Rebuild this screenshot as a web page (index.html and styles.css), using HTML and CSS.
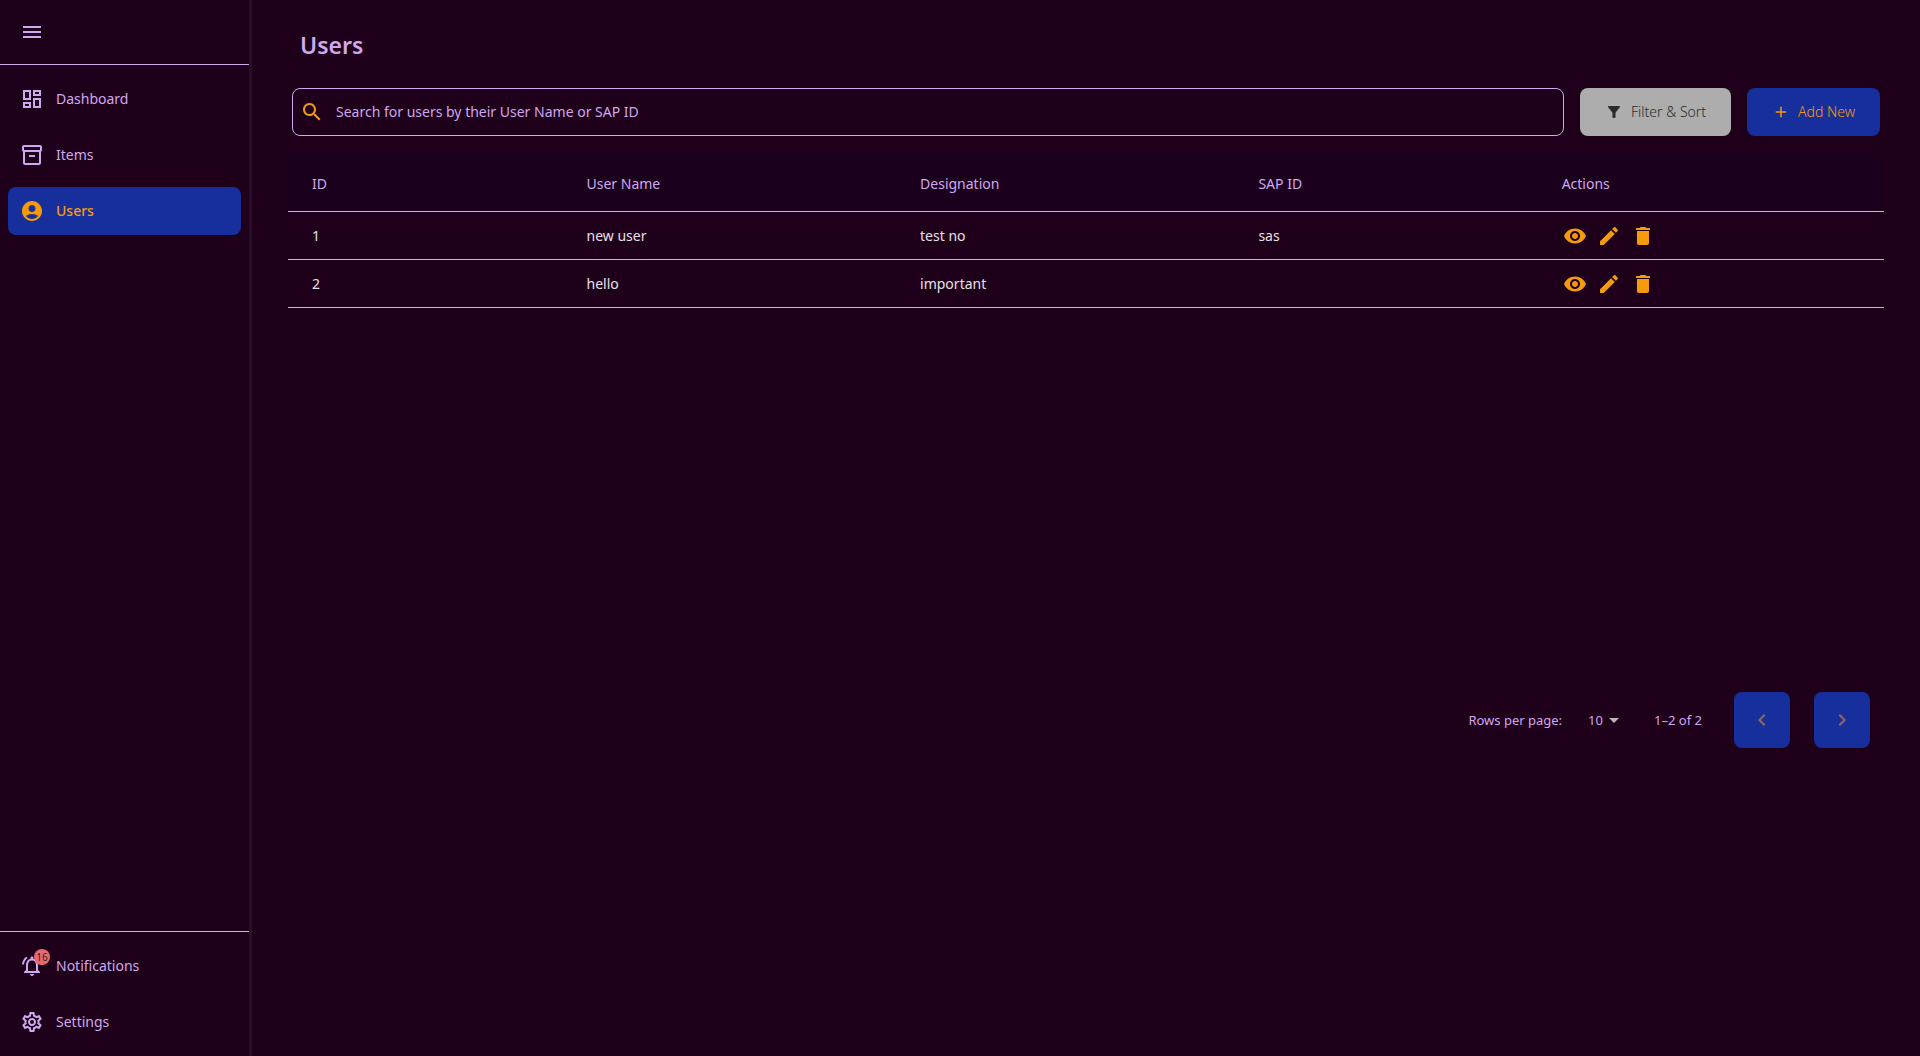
FILE: index.html
```html
<!DOCTYPE html>
<html lang="en">
<head>
<meta charset="utf-8">
<meta name="viewport" content="width=device-width, initial-scale=1">
<title>Users</title>
<link rel="stylesheet" href="styles.css">
</head>
<body>
<svg class="sprite" aria-hidden="true">
  <symbol id="eye" viewBox="0 0 24 24"><path d="M12 4.500C7 4.500 2.730 7.610 1 12c1.730 4.390 6 7.500 11 7.500s9.270-3.110 11-7.500c-1.730-4.390-6-7.500-11-7.500zM12 17c-2.760 0-5-2.240-5-5s2.240-5 5-5 5 2.240 5 5-2.240 5-5 5zm0-8c-1.660 0-3 1.340-3 3s1.340 3 3 3 3-1.340 3-3-1.340-3-3-3z"/></symbol>
  <symbol id="pencil" viewBox="0 0 24 24"><path d="M3 17.250V21h3.750L17.810 9.940l-3.750-3.750L3 17.250zM20.710 7.040c.39-.39.39-1.020 0-1.410l-2.340-2.340c-.39-.39-1.020-.39-1.410 0l-1.830 1.830 3.750 3.750 1.830-1.830z"/></symbol>
  <symbol id="trash" viewBox="0 0 24 24"><path d="M6 19c0 1.100.9 2 2 2h8c1.100 0 2-.9 2-2V7H6v12zM19 4h-3.500l-1-1h-5l-1 1H5v2h14V4z"/></symbol>
</svg>
<div class="app">
  <aside class="sidebar">
    <div class="sidebar-top">
      <button class="menu-button" type="button" aria-label="Toggle menu">
        <svg class="icon" viewBox="0 0 24 24"><path d="M3 18h18v-2H3v2zm0-5h18v-2H3v2zm0-7v2h18V6H3z"/></svg>
      </button>
    </div>
    <nav class="nav" aria-label="Main">
      <a class="nav-link" href="#dashboard">
        <svg class="icon" viewBox="0 0 24 24"><path d="M19 5v2h-4V5h4M9 5v6H5V5h4m10 8v6h-4v-6h4M9 17v2H5v-2h4M21 3h-8v6h8V3zM11 3H3v10h8V3zm10 8h-8v10h8V11zm-10 4H3v6h8v-6z"/></svg>
        Dashboard
      </a>
      <a class="nav-link" href="#items">
        <svg class="icon" viewBox="0 0 24 24"><path d="M20 2H4c-1 0-2 .9-2 2v3.010c0 .72.43 1.340 1 1.690V20c0 1.100 1.100 2 2 2h14c.9 0 2-.9 2-2V8.700c.57-.35 1-.97 1-1.690V4c0-1.100-1-2-2-2zm-1 18H5V9h14v11zm1-13H4V4h16v3z"/><path d="M9 12h6v2H9z"/></svg>
        Items
      </a>
      <a class="nav-link nav-link-active" href="#users" aria-current="page">
        <svg class="icon" viewBox="0 0 24 24"><path d="M12 2C6.480 2 2 6.480 2 12s4.480 10 10 10 10-4.480 10-10S17.520 2 12 2zm0 4c1.930 0 3.500 1.570 3.500 3.500S13.930 13 12 13s-3.500-1.570-3.500-3.500S10.070 6 12 6zm0 14c-2.030 0-4.430-.82-6.140-2.880C7.550 15.800 9.680 15 12 15s4.450.8 6.140 2.120C16.430 19.180 14.030 20 12 20z"/></svg>
        Users
      </a>
    </nav>
    <nav class="nav nav-bottom" aria-label="Account">
      <a class="nav-link" href="#notifications">
        <span class="bell">
          <svg class="icon" viewBox="0 0 24 24"><path d="M12 22c1.100 0 2-.9 2-2h-4c0 1.100.9 2 2 2zm6-6v-5c0-3.070-1.630-5.640-4.500-6.320V4c0-.83-.67-1.500-1.500-1.500s-1.500.67-1.500 1.500v.68C7.640 5.360 6 7.920 6 11v5l-2 2v1h16v-1l-2-2zm-2 1H8v-6c0-2.480 1.510-4.500 4-4.500s4 2.020 4 4.500v6zM7.580 4.080L6.150 2.650C3.750 4.480 2.170 7.300 2.030 10.500h2c.15-2.650 1.510-4.970 3.550-6.420zm12.390 6.420h2c-.15-3.200-1.730-6.020-4.120-7.850l-1.420 1.430c2.020 1.450 3.390 3.770 3.540 6.420z"/></svg>
          <span class="badge">16</span>
        </span>
        Notifications
      </a>
      <a class="nav-link" href="#settings">
        <svg class="icon" viewBox="0 0 24 24"><path d="M19.430 12.980c.04-.32.07-.64.07-.98 0-.34-.03-.66-.07-.98l2.110-1.650c.19-.15.24-.42.12-.64l-2-3.460c-.09-.16-.26-.25-.44-.25-.06 0-.12.01-.17.03l-2.490 1c-.52-.4-1.080-.73-1.690-.98l-.38-2.650C14.460 2.180 14.250 2 14 2h-4c-.25 0-.46.18-.49.42l-.38 2.650c-.61.25-1.170.59-1.690.98l-2.490-1c-.06-.02-.12-.03-.18-.03-.17 0-.34.09-.43.25l-2 3.460c-.13.22-.07.49.12.64l2.110 1.650c-.04.32-.07.65-.07.98 0 .33.03.66.07.98l-2.110 1.650c-.19.15-.24.42-.12.64l2 3.460c.09.16.26.25.44.25.06 0 .12-.01.17-.03l2.490-1c.52.4 1.080.73 1.690.98l.38 2.650c.03.24.24.42.49.42h4c.25 0 .46-.18.49-.42l.38-2.650c.61-.25 1.170-.59 1.690-.98l2.490 1c.06.02.12.03.18.03.17 0 .34-.09.43-.25l2-3.460c.12-.22.07-.49-.12-.64l-2.110-1.650zm-1.980-1.710c.04.31.05.52.05.73 0 .21-.02.43-.05.73l-.14 1.130.89.7 1.080.84-.7 1.210-1.270-.51-1.040-.42-.9.680c-.43.32-.84.56-1.250.73l-1.060.43-.16 1.130-.2 1.350h-1.400l-.19-1.350-.16-1.130-1.060-.43c-.43-.18-.83-.41-1.230-.71l-.91-.7-1.060.43-1.270.51-.7-1.210 1.080-.84.89-.7-.14-1.130c-.03-.31-.05-.54-.05-.74s.02-.43.05-.73l.14-1.130-.89-.7-1.080-.84.7-1.210 1.270.51 1.040.42.9-.68c.43-.32.84-.56 1.250-.73l1.060-.43.16-1.130.2-1.350h1.390l.19 1.350.16 1.130 1.060.43c.43.18.83.41 1.230.71l.91.7 1.060-.43 1.270-.51.7 1.210-1.070.85-.89.7.14 1.130zM12 8c-2.210 0-4 1.790-4 4s1.790 4 4 4 4-1.790 4-4-1.790-4-4-4zm0 6c-1.100 0-2-.9-2-2s.9-2 2-2 2 .9 2 2-.9 2-2 2z"/></svg>
        Settings
      </a>
    </nav>
  </aside>

  <main class="content">
    <h1 class="title">Users</h1>
    <div class="toolbar">
      <label class="search">
        <svg class="icon" viewBox="0 0 24 24"><path d="M15.500 14h-.79l-.28-.27C15.410 12.590 16 11.110 16 9.500 16 5.910 13.090 3 9.500 3S3 5.910 3 9.500 5.910 16 9.500 16c1.610 0 3.090-.59 4.230-1.570l.27.28v.79l5 4.990L20.490 19l-4.990-5zm-6 0C7.010 14 5 11.990 5 9.500S7.010 5 9.500 5 14 7.010 14 9.500 11.990 14 9.500 14z"/></svg>
        <input class="search-input" type="search" aria-label="Search users" placeholder="Search for users by their User Name or SAP ID">
      </label>
      <button class="button button-filter" type="button">
        <svg class="icon-small" viewBox="0 0 24 24"><path d="M4.250 5.610C6.270 8.200 10 13 10 13v6c0 .55.45 1 1 1h2c.55 0 1-.45 1-1v-6s3.720-4.800 5.740-7.390c.51-.66.04-1.610-.79-1.610H5.040c-.83 0-1.300.95-.79 1.610z"/></svg>
        Filter &amp; Sort
      </button>
      <button class="button button-add" type="button">
        <svg class="icon-small" viewBox="0 0 24 24"><path d="M19 13h-6v6h-2v-6H5v-2h6V5h2v6h6v2z"/></svg>
        Add New
      </button>
    </div>

    <section class="table-area" aria-label="User list">
      <table class="table">
        <colgroup>
          <col class="col-id"><col class="col-name"><col class="col-role"><col class="col-sap"><col>
        </colgroup>
        <thead>
          <tr><th scope="col">ID</th><th scope="col">User Name</th><th scope="col">Designation</th><th scope="col">SAP ID</th><th scope="col">Actions</th></tr>
        </thead>
        <tbody>
          <tr>
            <td>1</td><td>new user</td><td>test no</td><td>sas</td>
            <td>
              <div class="actions">
                <button class="action" type="button" aria-label="View new user"><svg class="icon"><use href="#eye"/></svg></button>
                <button class="action" type="button" aria-label="Edit new user"><svg class="icon"><use href="#pencil"/></svg></button>
                <button class="action" type="button" aria-label="Delete new user"><svg class="icon"><use href="#trash"/></svg></button>
              </div>
            </td>
          </tr>
          <tr>
            <td>2</td><td>hello</td><td>important</td><td></td>
            <td>
              <div class="actions">
                <button class="action" type="button" aria-label="View hello"><svg class="icon"><use href="#eye"/></svg></button>
                <button class="action" type="button" aria-label="Edit hello"><svg class="icon"><use href="#pencil"/></svg></button>
                <button class="action" type="button" aria-label="Delete hello"><svg class="icon"><use href="#trash"/></svg></button>
              </div>
            </td>
          </tr>
        </tbody>
      </table>
    </section>

    <div class="pagination">
      <label for="rows">Rows per page:</label>
      <div class="select">
        <select id="rows"><option>10</option><option>25</option><option>50</option></select>
        <svg class="select-arrow" viewBox="0 0 24 24"><path d="M7 10l5 5 5-5z"/></svg>
      </div>
      <span class="range">1–2 of 2</span>
      <button class="page-button" type="button" aria-label="Previous page" disabled>
        <svg class="icon-page" viewBox="0 0 24 24"><path d="M15.410 16.590 10.830 12l4.580-4.590L14 6l-6 6 6 6z"/></svg>
      </button>
      <button class="page-button" type="button" aria-label="Next page" disabled>
        <svg class="icon-page" viewBox="0 0 24 24"><path d="M8.590 16.590 13.170 12 8.590 7.410 10 6l6 6-6 6z"/></svg>
      </button>
    </div>
  </main>
</div>
</body>
</html>
```
FILE: styles.css
```css
:root {
  --bg: #1e001a;
  --head: #1b001e;
  --edge: #2b0e2b;
  --lilac: #d0a8ef;
  --orange: #f59b0b;
  --blue: #172f9c;
}

* { box-sizing: border-box; }

body {
  margin: 0;
  background: var(--bg);
  color: var(--lilac);
  font: 14px/24px "Noto Sans", "Open Sans", sans-serif;
}

button, input, select { font: inherit; color: inherit; }
button { border: 0; background: none; cursor: pointer; }

.sprite { display: none; }
.icon { display: block; flex: none; width: 24px; height: 24px; fill: currentColor; }
.icon-small { display: block; flex: none; width: 18px; height: 18px; fill: currentColor; }

.app { display: flex; min-height: 100vh; }

.sidebar {
  display: flex;
  flex: none;
  flex-direction: column;
  width: 252px;
  border-right: 3px solid var(--edge);
}
.sidebar-top {
  display: flex;
  align-items: center;
  height: 65px;
  padding: 0 16px;
  border-bottom: 1px solid var(--lilac);
}
.menu-button { padding: 4px; }

.nav { display: flex; flex-direction: column; gap: 8px; padding: 10px 8px; }
.nav-bottom { margin-top: auto; border-top: 1px solid var(--lilac); }
.nav-link {
  display: flex;
  align-items: center;
  gap: 12px;
  height: 48px;
  padding: 0 12px;
  border-radius: 8px;
  color: inherit;
  text-decoration: none;
}
.nav-link-active { background: var(--blue); color: var(--orange); font-weight: 500; }

.bell { position: relative; }
.badge {
  position: absolute;
  top: -5px;
  right: -6px;
  width: 16px;
  height: 16px;
  border-radius: 8px;
  background: #e8696d;
  color: #3a1a2a;
  font-size: 10px;
  line-height: 16px;
  text-align: center;
}

.content { flex: 1; min-width: 0; padding: 24px 36px; }
.title { margin: 0 12px; font-size: 23px; line-height: 42px; font-weight: 600; }

.toolbar { display: flex; gap: 16px; margin: 22px 4px 20px; }
.search {
  display: flex;
  flex: 1;
  align-items: center;
  gap: 12px;
  height: 48px;
  padding: 0 7px;
  border: 1px solid var(--lilac);
  border-radius: 8px;
}
.search .icon { color: var(--orange); }
.search-input { flex: 1; min-width: 0; padding: 0; border: 0; outline: 0; background: none; }
.search-input::placeholder { color: var(--lilac); opacity: 1; }

.button {
  display: flex;
  align-items: center;
  gap: 8px;
  height: 48px;
  padding: 0 25px;
  border-radius: 8px;
  font-weight: 300;
  white-space: nowrap;
}
.button-filter { background: #adadad; color: #2b2b2b; }
.button-add { background: var(--blue); color: var(--orange); }

.table-area { min-height: 536px; }
.table { width: 100%; border-collapse: separate; border-spacing: 0; table-layout: fixed; }
.col-id { width: 17.2%; }
.col-name { width: 20.9%; }
.col-role { width: 21.2%; }
.col-sap { width: 19%; }
.table th, .table td {
  height: 48px;
  padding: 0 24px;
  border-bottom: 1px solid var(--lilac);
  text-align: left;
}
.table th { height: 56px; background: var(--head); font-weight: 400; }
.table td { color: #e6e0e6; }
.actions { display: flex; gap: 8px; color: var(--orange); }
.action { padding: 1px; }

.pagination {
  display: flex;
  align-items: center;
  justify-content: flex-end;
  padding-right: 14px;
  font-size: 13px;
}
.select { display: flex; align-items: center; margin: 0 28px 0 26px; }
.select select {
  width: 34px;
  margin-right: -20px;
  padding: 0;
  border: 0;
  background: none;
  appearance: none;
}
.select-arrow { width: 24px; height: 24px; fill: #bdb3bd; pointer-events: none; }
.range { margin-right: 8px; }
.page-button {
  display: grid;
  place-items: center;
  width: 56px;
  height: 56px;
  margin-left: 24px;
  border-radius: 8px;
  background: var(--blue);
  color: #94675c;
}
.icon-page { width: 24px; height: 24px; fill: currentColor; }
```
